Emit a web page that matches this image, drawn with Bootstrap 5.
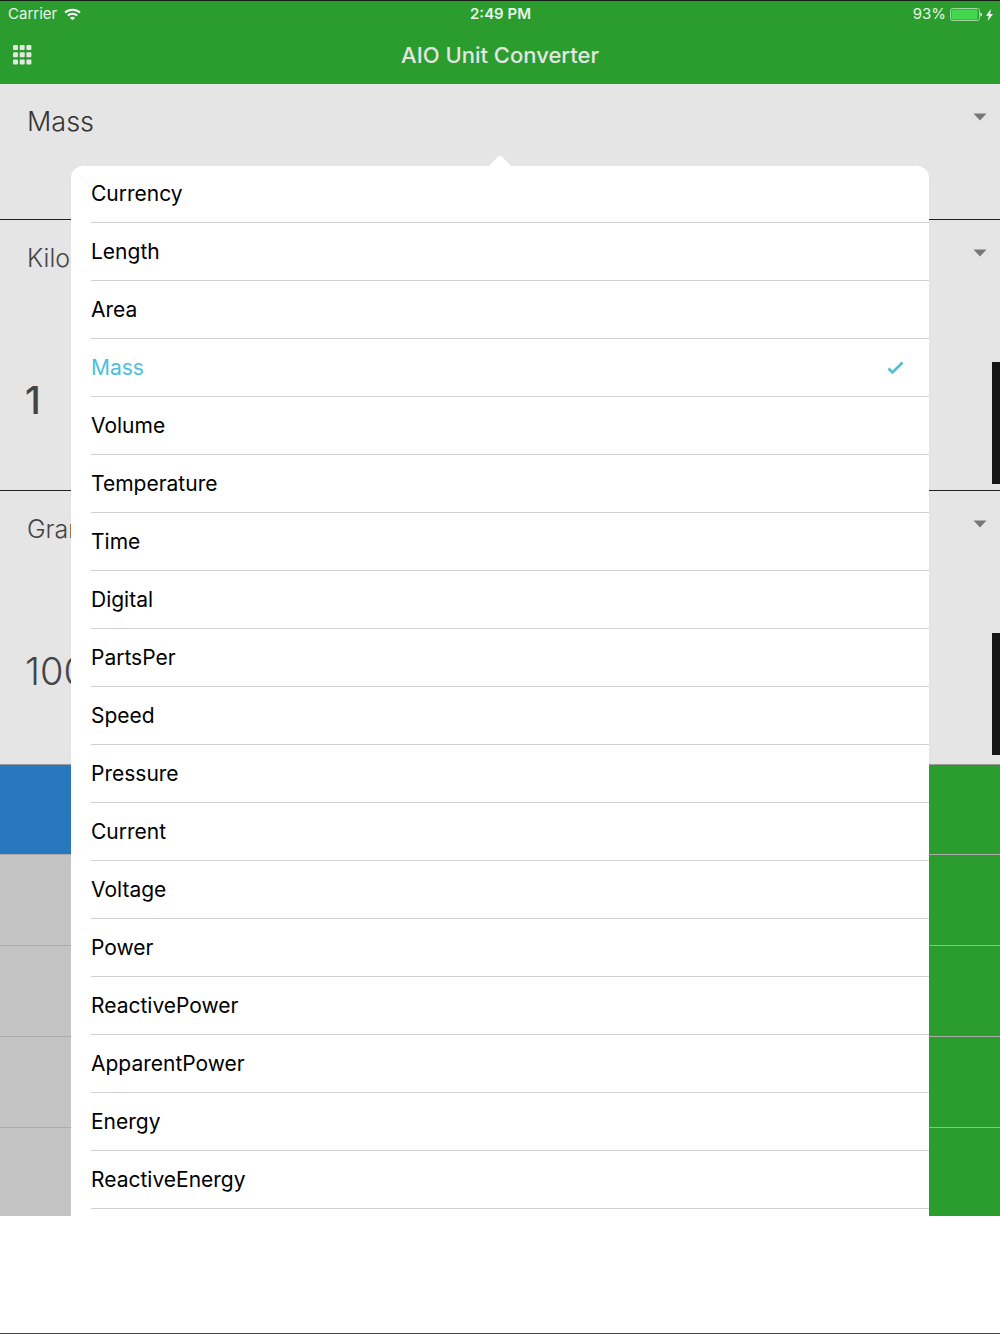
<!DOCTYPE html>
<html lang="en">
<head>
<meta charset="utf-8">
<meta name="viewport" content="width=device-width, initial-scale=1">
<title>AIO Unit Converter</title>
<link href="https://cdn.jsdelivr.net/npm/bootstrap@5.3.0/dist/css/bootstrap.min.css" rel="stylesheet">
<style>
  body { font-family: Inter, "Liberation Sans", sans-serif; min-height: 100vh; background: #fff; border-top: 1px solid #142014; border-bottom: 1px solid #444; }
  .app-header { background: #2a9d2e; color: #e5e5e5; height: 83px; }
  .status-bar { height: 27px; padding: 0 7px 0 8px; font-size: 15px; color: #e9f5e9; }
  .status-side { flex: 1 1 0; gap: 7px; }
  .battery-side { gap: 4px; }
  .title-bar { height: 54px; padding: 0 12px; }
  .title-side { flex: 1 1 0; }
  .app-title { font-size: 22px; line-height: 28px; font-weight: 500; }
  .panel { background: #e5e5e5; color: #444; border-bottom: 1px solid #222; padding: 20px 13px 0 27px; }
  .panel-type { height: 136px; }
  .panel-unit { height: 271px; padding-right: 0; }
  .panel-result { height: 274px; border-bottom-color: #999; }
  .picker { appearance: none; border: 0; background: transparent; padding: 0; color: #333; font-size: 27px; font-weight: 300; line-height: 36px; height: 36px; }
  .picker-small { font-size: 25px; color: #444; }
  .picker-row { padding-right: 13px; }
  .panel-type .picker-row { padding-right: 0; }
  .caret { margin-top: 9px; }
  .value-row { height: 122px; margin-top: 86px; }
  .value-text { border: 0; background: transparent; color: #444; font-size: 38px; line-height: 48px; padding: 0; margin: 14px 0 0 -2px; font-weight: 500; min-width: 0; }
  .value-result { font-weight: 300; }
  .edge-block { width: 8px; background: #161717; align-self: stretch; }
  .key { height: 91px; border: 0; border-bottom: 1px solid #acacac; background: #c3c3c3; }
  .key-row:first-child .key { height: 90px; }
  .key-row:last-child .key { height: 88px; border-bottom: 0; }
  .key-blue { background: #2878c0; }
  .key-green { background: #2a9d2e; }
  .type-popover { left: 71px; right: 71px; top: 165px; bottom: 0; background: #fff; border-radius: 12px 12px 0 0; color: #000; }
  .popover-tip { top: -10px; left: 50%; margin-left: -12px; }
  .type-list { padding-left: 20px; }
  .type-item { height: 58px; border: 0; border-bottom: 1px solid #d0d0d2; background: transparent; padding: 0 25px 0 0; font-size: 21px; color: #000; }
  li:first-child .type-item { height: 57px; }
  .type-item.chosen { color: #4bbfe0; }
</style>
<script src="https://cdn.jsdelivr.net/npm/bootstrap@5.3.0/dist/js/bootstrap.bundle.min.js"></script>
</head>
<body>
<div class="position-relative overflow-hidden">
  <header class="app-header">
    <div class="status-bar d-flex align-items-center">
      <div class="status-side d-flex align-items-center">
        <span>Carrier</span>
        <svg width="17" height="13" viewBox="0 0 17 13" fill="none" stroke="#fff" stroke-width="2" aria-hidden="true"><path d="M1 4.6C5.2.7 11.8.7 16 4.6M3.8 7.6c2.6-2.4 6.8-2.4 9.4 0"/><path d="M8.500 12.300 5.800 9.700c1.500-1.400 3.900-1.400 5.400 0z" fill="#fff" stroke="none"/></svg>
      </div>
      <span class="fw-semibold">2:49 PM</span>
      <div class="status-side battery-side d-flex align-items-center justify-content-end">
        <span>93%</span>
        <svg width="32" height="14" viewBox="0 .8 32 14" aria-hidden="true"><rect x=".5" y="1.300" width="29" height="12" rx="2" fill="none" stroke="#9ed8a0"/><rect x="1.500" y="2.300" width="26" height="10" rx="1" fill="#44d64f"/><path d="M30.500 5.300c1.800.5 1.800 3.500 0 4z" fill="#fff"/></svg>
        <svg width="7" height="12" viewBox="0 0 7 12" fill="#fff" aria-hidden="true"><path d="M5 0 0 6.800h2.800L1.700 12 7 4.900H4z"/></svg>
      </div>
    </div>
    <div class="title-bar d-flex align-items-center">
      <div class="title-side">
        <button type="button" class="btn p-0 border-0 d-flex" aria-label="Menu">
          <svg width="20" height="20" viewBox="0 0 20 20" fill="#e5e5e5"><rect x="1" width="5" height="5" rx="1"/><rect x="7.700" width="5" height="5" rx="1"/><rect x="14.400" width="5" height="5" rx="1"/><rect x="1" y="7.200" width="5" height="5" rx="1"/><rect x="7.700" y="7.200" width="5" height="5" rx="1"/><rect x="14.400" y="7.200" width="5" height="5" rx="1"/><rect x="1" y="14.500" width="5" height="5" rx="1"/><rect x="7.700" y="14.500" width="5" height="5" rx="1"/><rect x="14.400" y="14.500" width="5" height="5" rx="1"/></svg>
        </button>
      </div>
      <h1 class="app-title m-0">AIO Unit Converter</h1>
      <div class="title-side"></div>
    </div>
  </header>

  <main>
    <section class="panel panel-type">
      <div class="picker-row d-flex align-items-start">
        <select class="picker flex-grow-1" aria-label="Unit type"><option>Mass</option></select>
        <svg class="caret" width="14" height="8" viewBox="0 0 14 8" fill="#777" aria-hidden="true"><path d="M.5.5h13L7 7.500z"/></svg>
      </div>
    </section>
    <section class="panel panel-unit">
      <div class="picker-row d-flex align-items-start">
        <select class="picker picker-small flex-grow-1" aria-label="From unit"><option>Kilogram</option></select>
        <svg class="caret" width="14" height="8" viewBox="0 0 14 8" fill="#777" aria-hidden="true"><path d="M.5.5h13L7 7.500z"/></svg>
      </div>
      <div class="value-row d-flex">
        <input class="value-text flex-grow-1 align-self-start" type="text" value="1" aria-label="Amount">
        <div class="edge-block"></div>
      </div>
    </section>
    <section class="panel panel-unit panel-result">
      <div class="picker-row d-flex align-items-start">
        <select class="picker picker-small flex-grow-1" aria-label="To unit"><option>Gram</option></select>
        <svg class="caret" width="14" height="8" viewBox="0 0 14 8" fill="#777" aria-hidden="true"><path d="M.5.5h13L7 7.500z"/></svg>
      </div>
      <div class="value-row d-flex">
        <input class="value-text value-result flex-grow-1 align-self-start" type="text" value="1000" readonly aria-label="Result">
        <div class="edge-block"></div>
      </div>
    </section>

    <section aria-label="Keypad">
      <div class="key-row row g-0"><button type="button" class="key key-blue col-6" aria-label="Clear"></button><button type="button" class="key key-green col-6" aria-label="Delete"></button></div>
      <div class="key-row row g-0"><button type="button" class="key col-6" aria-label="Seven"></button><button type="button" class="key key-green col-6" aria-label="Divide"></button></div>
      <div class="key-row row g-0"><button type="button" class="key col-6" aria-label="Four"></button><button type="button" class="key key-green col-6" aria-label="Multiply"></button></div>
      <div class="key-row row g-0"><button type="button" class="key col-6" aria-label="One"></button><button type="button" class="key key-green col-6" aria-label="Subtract"></button></div>
      <div class="key-row row g-0"><button type="button" class="key col-6" aria-label="Zero"></button><button type="button" class="key key-green col-6" aria-label="Add"></button></div>
    </section>
  </main>

  <div class="type-popover position-absolute">
    <svg class="popover-tip position-absolute" width="24" height="11" viewBox="0 0 24 11" fill="#fff" aria-hidden="true"><path d="M0 11 9.500 1.200q2.500-2.200 5 0L24 11z"/></svg>
    <ul class="type-list list-unstyled m-0">
      <li><button type="button" class="type-item w-100 text-start">Currency</button></li>
      <li><button type="button" class="type-item w-100 text-start">Length</button></li>
      <li><button type="button" class="type-item w-100 text-start">Area</button></li>
      <li><button type="button" class="type-item chosen w-100 d-flex align-items-center justify-content-between">Mass
        <svg width="17" height="14" viewBox="0 0 17 14" fill="none" stroke="#4bbfe0" stroke-width="2.600" aria-hidden="true"><path d="m1.500 7.500 4 4L15.500 1.500"/></svg></button></li>
      <li><button type="button" class="type-item w-100 text-start">Volume</button></li>
      <li><button type="button" class="type-item w-100 text-start">Temperature</button></li>
      <li><button type="button" class="type-item w-100 text-start">Time</button></li>
      <li><button type="button" class="type-item w-100 text-start">Digital</button></li>
      <li><button type="button" class="type-item w-100 text-start">PartsPer</button></li>
      <li><button type="button" class="type-item w-100 text-start">Speed</button></li>
      <li><button type="button" class="type-item w-100 text-start">Pressure</button></li>
      <li><button type="button" class="type-item w-100 text-start">Current</button></li>
      <li><button type="button" class="type-item w-100 text-start">Voltage</button></li>
      <li><button type="button" class="type-item w-100 text-start">Power</button></li>
      <li><button type="button" class="type-item w-100 text-start">ReactivePower</button></li>
      <li><button type="button" class="type-item w-100 text-start">ApparentPower</button></li>
      <li><button type="button" class="type-item w-100 text-start">Energy</button></li>
      <li><button type="button" class="type-item w-100 text-start">ReactiveEnergy</button></li>
    </ul>
  </div>
</div>
</body>
</html>
